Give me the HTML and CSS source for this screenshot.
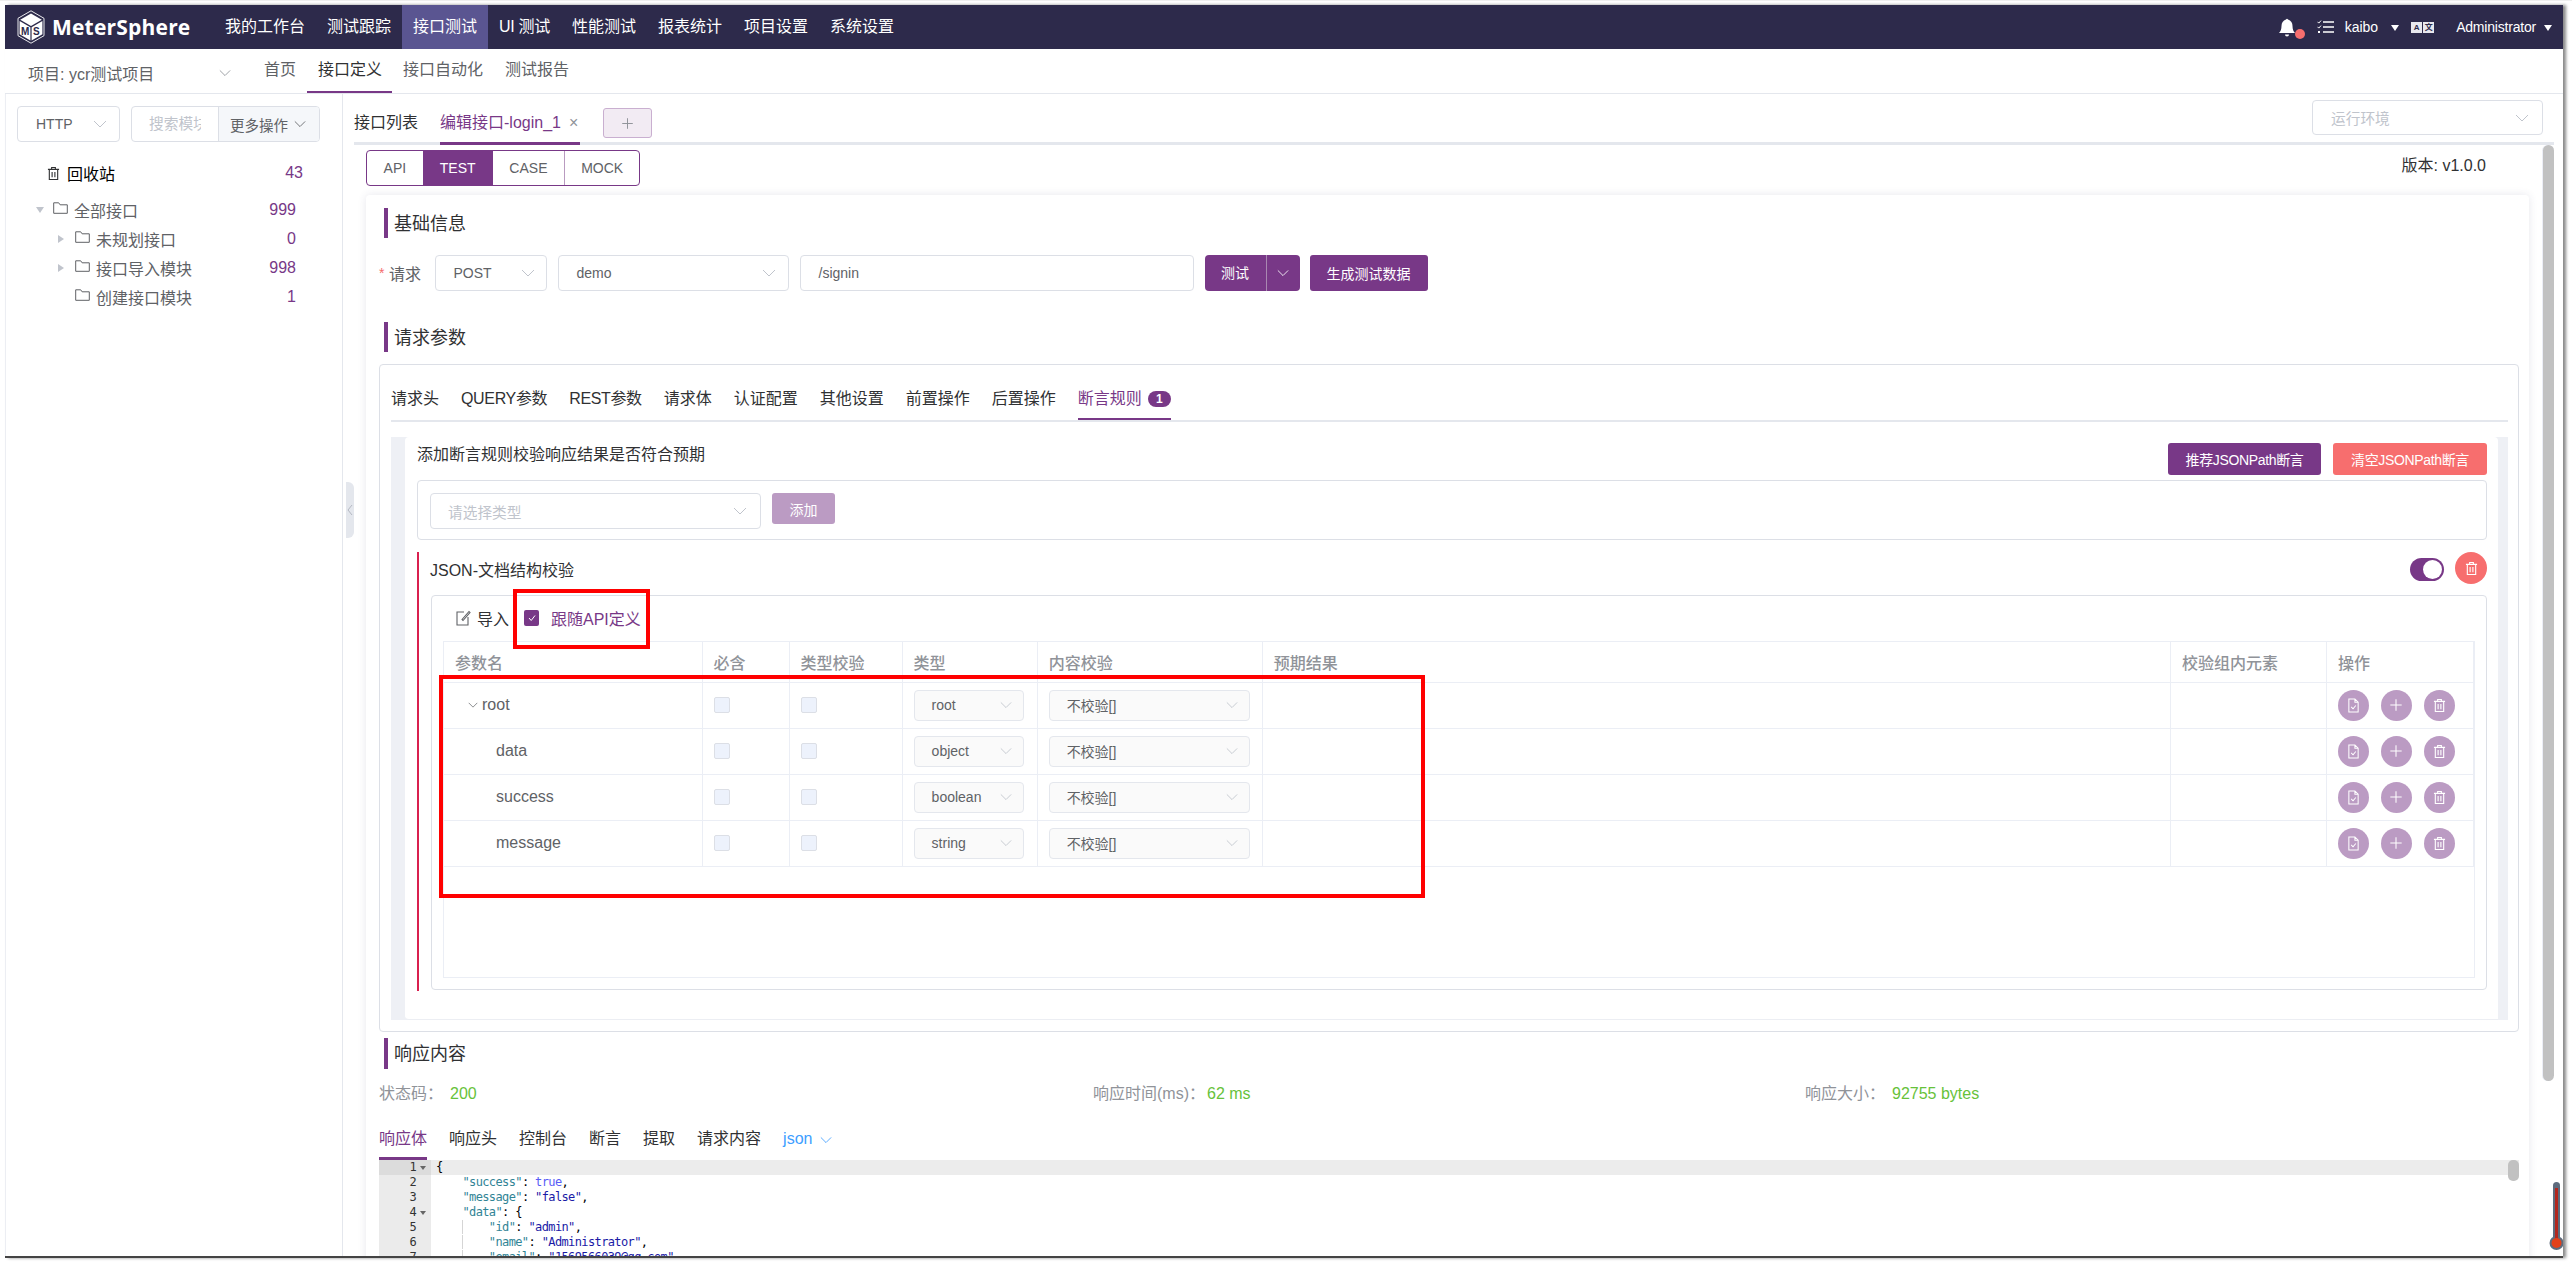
FILE: index.html
```html
<!DOCTYPE html>
<html>
<head>
	<meta charset="utf-8">
	<title>MeterSphere</title>
	<link rel="stylesheet" href="styles.css">
</head>
<body>
	<!-- shared icons -->
	<svg class="defs">
		<symbol id="chev" viewBox="0 0 14 8"><path d="M1 1l6 6 6-6" fill="none" stroke="currentColor"/></symbol>
		<symbol id="trash" viewBox="0 0 14 16"><path d="M1 3.5h12M5 3.5v-2h4v2M2.5 3.5v11h9v-11M5.5 6.5v5.5M8.5 6.5v5.5" fill="none" stroke="currentColor" stroke-width="1.2"/></symbol>
		<symbol id="folder" viewBox="0 0 15 12"><path d="M.7 11.3V.8h5l1.4 2h7.2v8.5z" fill="none" stroke="currentColor"/></symbol>
		<symbol id="doc" viewBox="0 0 14 16"><path d="M2 1h6.5L12 4.5V15H2zM8.5 1v3.5H12M4.5 9.5l2 2 3-3.5" fill="none" stroke="currentColor" stroke-width="1.1"/></symbol>
		<symbol id="plus" viewBox="0 0 16 16"><path d="M1.5 8h13M8 1.5v13" fill="none" stroke="currentColor" stroke-width="1.2"/></symbol>
	</svg>

	<div class="app">
		<div class="topbar">
			<div class="brand">
				<svg class="logo" viewBox="0 0 28 34">
					<path d="M14 .8L27 8.3v17.4L14 33.2 1 25.7V8.3z" fill="none" stroke="#fff" stroke-width=".9"/>
					<path d="M14 3.5L24.8 9.7 14 16 3.2 9.7z" fill="#fff"/>
					<path d="M2.6 11L13.4 17.3v13.2L2.6 24.2zM25.4 11L14.6 17.3v13.2l10.8-6.3z" fill="#fff"/>
					<text x="4" y="25" class="logo-text">M</text>
					<text x="16" y="25" class="logo-text">S</text>
				</svg>
				<span class="brand-name">MeterSphere</span>
			</div>
			<div class="nav-item">我的工作台</div>
			<div class="nav-item">测试跟踪</div>
			<div class="nav-item active">接口测试</div>
			<div class="nav-item nav-ui">UI 测试</div>
			<div class="nav-item">性能测试</div>
			<div class="nav-item">报表统计</div>
			<div class="nav-item">项目设置</div>
			<div class="nav-item">系统设置</div>
			<div class="top-right">
				<svg class="bell" viewBox="0 0 26 22">
					<path d="M7 1.5c.5-1 1.500-1 2 0 3 .8 4.500 3.500 4.500 6.500 0 3.500 1 5.500 2.500 7H0c1.500-1.500 2.500-3.500 2.500-7 0-3 1.500-5.700 4.500-6.500zM6 16.500h4a2 2 0 0 1-4 0z" fill="#fff"/>
					<circle cx="21" cy="16" r="5" fill="#f76e6e"/>
				</svg>
				<svg class="tasks" viewBox="0 0 17 14">
					<path d="M6 2h11M6 7h11M6 12h11" stroke="#fff" stroke-width="1.6"/>
					<path d="M.5 1.800l1.300 1.300L4 .6" fill="none" stroke="#fff"/>
					<path d="M.5 6.800l1.300 1.300L4 5.600" fill="none" stroke="#fff"/>
					<rect x="1" y="11" width="2" height="2" fill="#fff"/>
				</svg>
				<span class="top-name kaibo">kaibo</span>
				<span class="caret"></span>
				<span class="lang"><b>A</b><b>文</b></span>
				<span class="top-name admin">Administrator</span>
				<span class="caret"></span>
			</div>
		</div>

		<div class="subbar">
			<div class="project">
				<span>项目: ycr测试项目</span>
				<svg class="chev"><use href="#chev"/></svg>
			</div>
			<div class="sub-item">首页</div>
			<div class="sub-item active">接口定义</div>
			<div class="sub-item">接口自动化</div>
			<div class="sub-item">测试报告</div>
		</div>

		<div class="content">
			<div class="sidebar">
				<div class="side-tools">
					<div class="sel sel-http"><span>HTTP</span><svg class="chev"><use href="#chev"/></svg></div>
					<div class="search-group">
						<div class="search-input">搜索模块</div>
						<div class="search-more">更多操作<svg class="chev dark"><use href="#chev"/></svg></div>
					</div>
				</div>
				<div class="tree-row recycle">
					<svg class="ico-trash"><use href="#trash"/></svg>
					<span class="tree-label">回收站</span>
					<span class="tree-count">43</span>
				</div>
				<div class="tree">
					<div class="tree-row">
						<span class="tri-down"></span>
						<svg class="ico-folder"><use href="#folder"/></svg>
						<span class="tree-label">全部接口</span>
						<span class="tree-count">999</span>
					</div>
					<div class="tree-row child">
						<span class="tri-right"></span>
						<svg class="ico-folder"><use href="#folder"/></svg>
						<span class="tree-label">未规划接口</span>
						<span class="tree-count">0</span>
					</div>
					<div class="tree-row child">
						<span class="tri-right"></span>
						<svg class="ico-folder"><use href="#folder"/></svg>
						<span class="tree-label">接口导入模块</span>
						<span class="tree-count">998</span>
					</div>
					<div class="tree-row child">
						<span class="tri-none"></span>
						<svg class="ico-folder"><use href="#folder"/></svg>
						<span class="tree-label">创建接口模块</span>
						<span class="tree-count">1</span>
					</div>
				</div>
			</div>
			<div class="collapse-handle"><svg class="handle-chev" viewBox="0 0 6 12"><path d="M5 1L1 6l4 5" fill="none" stroke="#b4b8c2"/></svg></div>

			<div class="main">
				<div class="main-tabs">
					<div class="main-tab">接口列表</div>
					<div class="main-tab active">编辑接口-login_1<span class="tab-close">×</span></div>
					<div class="tab-add"><svg class="ico-add"><use href="#plus"/></svg></div>
					<div class="sel sel-env placeholder"><span>运行环境</span><svg class="chev"><use href="#chev"/></svg></div>
				</div>

				<div class="pane">
					<div class="mode-row">
						<div class="mode-group">
							<div class="mode mode-api">API</div>
							<div class="mode mode-test active">TEST</div>
							<div class="mode mode-case">CASE</div>
							<div class="mode mode-mock">MOCK</div>
						</div>
						<div class="version">版本: v1.0.0</div>
					</div>

					<div class="card">
						<div class="heading">基础信息</div>
						<div class="req-row">
							<span class="req-star">*</span>
							<span class="req-label">请求</span>
							<div class="sel sel-method"><span>POST</span><svg class="chev"><use href="#chev"/></svg></div>
							<div class="sel sel-env-demo"><span>demo</span><svg class="chev"><use href="#chev"/></svg></div>
							<div class="sel sel-path"><span>/signin</span></div>
							<div class="split-btn">
								<span class="split-main">测试</span>
								<span class="split-arrow"><svg class="chev white"><use href="#chev"/></svg></span>
							</div>
							<div class="btn btn-gen">生成测试数据</div>
						</div>

						<div class="heading heading-params">请求参数</div>
						<div class="param-box">
							<div class="tabs">
								<div class="tab">请求头</div>
								<div class="tab tab-latin">QUERY参数</div>
								<div class="tab tab-latin">REST参数</div>
								<div class="tab">请求体</div>
								<div class="tab">认证配置</div>
								<div class="tab">其他设置</div>
								<div class="tab">前置操作</div>
								<div class="tab">后置操作</div>
								<div class="tab active">断言规则<span class="badge">1</span></div>
							</div>

							<div class="assert-outer">
								<div class="assert-inner">
									<div class="assert-head">
										<div class="assert-title">添加断言规则校验响应结果是否符合预期</div>
										<div class="btn btn-json">推荐JSONPath断言</div>
										<div class="btn btn-clear">清空JSONPath断言</div>
									</div>
									<div class="assert-add">
										<div class="sel sel-type placeholder"><span>请选择类型</span><svg class="chev"><use href="#chev"/></svg></div>
										<div class="btn btn-add">添加</div>
									</div>

									<div class="json-block">
										<div class="json-head">
											<div class="json-title">JSON-文档结构校验</div>
											<div class="switch"><span class="knob"></span></div>
											<div class="circle-del"><svg class="ico-del"><use href="#trash"/></svg></div>
										</div>
										<div class="json-box">
											<div class="json-tools">
												<svg class="ico-edit" viewBox="0 0 15 16"><path d="M8 2H1v13h11V7M6 9.500L13 1.500l1 1L7 10.500z" fill="none" stroke="#606266" stroke-width="1.100"/></svg>
												<span class="import-text">导入</span>
												<span class="check-on"><svg class="check-mark" viewBox="0 0 10 10"><path d="M2 5l2.200 2.500L8 2.500" fill="none" stroke="#fff"/></svg></span>
												<span class="follow-text">跟随API定义</span>
											</div>
											<div class="table-wrap">
												<table class="schema">
													<colgroup>
														<col class="c-name"><col class="c-req"><col class="c-chk"><col class="c-type"><col class="c-rule"><col class="c-exp"><col class="c-grp"><col class="c-op">
													</colgroup>
													<tr>
														<th>参数名</th><th>必含</th><th>类型校验</th><th>类型</th><th>内容校验</th><th>预期结果</th><th>校验组内元素</th><th>操作</th>
													</tr>
													<tr>
														<td><div class="name-root"><svg class="chev tiny"><use href="#chev"/></svg>root</div></td>
														<td><span class="check-off"></span></td>
														<td><span class="check-off"></span></td>
														<td><div class="sel sel-cell"><span>root</span><svg class="chev"><use href="#chev"/></svg></div></td>
														<td><div class="sel sel-cell sel-rule"><span>不校验[]</span><svg class="chev"><use href="#chev"/></svg></div></td>
														<td></td>
														<td></td>
														<td><div class="ops">
															<span class="op"><svg class="ico-doc"><use href="#doc"/></svg></span>
															<span class="op"><svg class="ico-plus"><use href="#plus"/></svg></span>
															<span class="op"><svg class="ico-doc"><use href="#trash"/></svg></span>
														</div></td>
													</tr>
													<tr>
														<td><div class="name-child">data</div></td>
														<td><span class="check-off"></span></td>
														<td><span class="check-off"></span></td>
														<td><div class="sel sel-cell"><span>object</span><svg class="chev"><use href="#chev"/></svg></div></td>
														<td><div class="sel sel-cell sel-rule"><span>不校验[]</span><svg class="chev"><use href="#chev"/></svg></div></td>
														<td></td>
														<td></td>
														<td><div class="ops">
															<span class="op"><svg class="ico-doc"><use href="#doc"/></svg></span>
															<span class="op"><svg class="ico-plus"><use href="#plus"/></svg></span>
															<span class="op"><svg class="ico-doc"><use href="#trash"/></svg></span>
														</div></td>
													</tr>
													<tr>
														<td><div class="name-child">success</div></td>
														<td><span class="check-off"></span></td>
														<td><span class="check-off"></span></td>
														<td><div class="sel sel-cell"><span>boolean</span><svg class="chev"><use href="#chev"/></svg></div></td>
														<td><div class="sel sel-cell sel-rule"><span>不校验[]</span><svg class="chev"><use href="#chev"/></svg></div></td>
														<td></td>
														<td></td>
														<td><div class="ops">
															<span class="op"><svg class="ico-doc"><use href="#doc"/></svg></span>
															<span class="op"><svg class="ico-plus"><use href="#plus"/></svg></span>
															<span class="op"><svg class="ico-doc"><use href="#trash"/></svg></span>
														</div></td>
													</tr>
													<tr>
														<td><div class="name-child">message</div></td>
														<td><span class="check-off"></span></td>
														<td><span class="check-off"></span></td>
														<td><div class="sel sel-cell"><span>string</span><svg class="chev"><use href="#chev"/></svg></div></td>
														<td><div class="sel sel-cell sel-rule"><span>不校验[]</span><svg class="chev"><use href="#chev"/></svg></div></td>
														<td></td>
														<td></td>
														<td><div class="ops">
															<span class="op"><svg class="ico-doc"><use href="#doc"/></svg></span>
															<span class="op"><svg class="ico-plus"><use href="#plus"/></svg></span>
															<span class="op"><svg class="ico-doc"><use href="#trash"/></svg></span>
														</div></td>
													</tr>
												</table>
											</div>
										</div>
									</div>
								</div>
							</div>
						</div>

						<div class="heading heading-resp">响应内容</div>
						<div class="resp-stats">
							<div><span class="stat-label">状态码：</span><span class="stat-val">200</span></div>
							<div><span class="stat-label">响应时间(ms)：</span><span class="stat-val stat-time">62 ms</span></div>
							<div><span class="stat-label">响应大小：</span><span class="stat-val">92755 bytes</span></div>
						</div>
						<div class="resp-tabs">
							<div class="tab active">响应体</div>
							<div class="tab">响应头</div>
							<div class="tab">控制台</div>
							<div class="tab">断言</div>
							<div class="tab">提取</div>
							<div class="tab">请求内容</div>
							<div class="tab tab-json">json<svg class="chev blue"><use href="#chev"/></svg></div>
						</div>
						<div class="editor">
							<div class="code-line current"><span class="ln">1<i class="fold"></i></span><span class="code">{</span></div>
							<div class="code-line"><span class="ln">2</span><span class="code">    <span class="k">"success"</span>: <span class="b">true</span>,</span></div>
							<div class="code-line"><span class="ln">3</span><span class="code">    <span class="k">"message"</span>: <span class="s">"false"</span>,</span></div>
							<div class="code-line"><span class="ln">4<i class="fold"></i></span><span class="code">    <span class="k">"data"</span>: {</span></div>
							<div class="code-line"><span class="ln">5</span><span class="code"><span class="indent">    </span><span class="guide">    </span><span class="k">"id"</span>: <span class="s">"admin"</span>,</span></div>
							<div class="code-line"><span class="ln">6</span><span class="code"><span class="indent">    </span><span class="guide">    </span><span class="k">"name"</span>: <span class="s">"Administrator"</span>,</span></div>
							<div class="code-line"><span class="ln">7</span><span class="code"><span class="indent">    </span><span class="guide">    </span><span class="k">"email"</span>: <span class="s">"1569566039@qq.com"</span>,</span></div>
							<div class="editor-thumb"></div>
						</div>
					</div>
					<div class="pane-thumb"></div>
				</div>
			</div>
		</div>

		<!-- red annotation boxes drawn over the capture -->
		<div class="mark mark-check"></div>
		<div class="mark mark-table"></div>

		<svg class="thermo" viewBox="0 0 14 70">
			<rect x="4" y="0" width="7" height="62" rx="3.500" fill="#5d6b7d"/>
			<circle cx="7.500" cy="61" r="7" fill="#5d6b7d"/>
			<rect x="6" y="6" width="3" height="52" fill="#b3261e"/>
			<circle cx="7.500" cy="61" r="5" fill="#e2401a"/>
		</svg>
	</div>
</body>
</html>
```
FILE: styles.css
```css
html, body {
	margin: 0;
	height: 1265px;
	overflow: hidden;
	background-color: #fff;
	font-family: "Liberation Sans", "Noto Sans CJK SC", sans-serif;
	font-size: 16px;
	color: #606266;
}
body {
	border-top: 1px solid #eee;
	box-sizing: border-box;
}
.defs {
	display: none;
}
.app {
	position: relative;
	box-sizing: border-box;
	width: 2558px;
	height: 1253px;
	margin: 4px 0 0 5px;
	overflow: hidden;
	border-bottom: 2px solid #444;
	box-shadow: 3px 0 3px #8a8a8a;
	background-color: #fff;
}
.chev {
	flex: none;
	width: 14px;
	height: 8px;
	color: #c0c4cc;
}
.chev.dark { color: #606266; }
.chev.white { color: #fff; }
.chev.blue { color: #409eff; margin-left: 8px; width: 12px; }
.chev.tiny { width: 10px; height: 6px; margin-right: 4px; color: #606266; }

/* top bar */
.topbar {
	display: flex;
	height: 44px;
	background-color: #2d2a4b;
	color: #fff;
}
.brand {
	display: flex;
	align-items: center;
	box-sizing: border-box;
	width: 209px;
	padding-left: 12px;
}
.logo {
	width: 28px;
	height: 34px;
}
.logo-text {
	font-size: 10px;
	font-weight: bold;
	fill: #2d2a4b;
}
.brand-name {
	margin-left: 7px;
	font-family: "Open Sans", sans-serif;
	font-size: 21px;
	font-weight: 700;
	letter-spacing: .2px;
}
.nav-item {
	padding: 0 11px;
	line-height: 44px;
}
.nav-item.active {
	background-color: #5a5591;
}
.nav-ui {
	letter-spacing: -.3px;
}
.top-right {
	display: flex;
	align-items: center;
	margin-left: auto;
	padding-right: 11px;
	font-size: 14px;
}
.bell {
	width: 26px;
	height: 22px;
	margin-top: 3px;
}
.tasks {
	width: 17px;
	height: 14px;
	margin-left: 12px;
}
.kaibo {
	margin-left: 11px;
}
.caret {
	width: 0;
	height: 0;
	margin: 2px 0 0 13px;
	border-left: 4.5px solid transparent;
	border-right: 4.5px solid transparent;
	border-top: 6px solid #fff;
}
.lang {
	display: flex;
	gap: 1px;
	margin-left: 12px;
}
.lang b {
	width: 11px;
	height: 11px;
	background-color: #e8e8ee;
	color: #2d2a4b;
	font-size: 8px;
	line-height: 11px;
	text-align: center;
}
.admin {
	margin-left: 22px;
	letter-spacing: -.2px;
}
.admin + .caret {
	margin-left: 8px;
}

/* sub menu */
.subbar {
	display: flex;
	height: 44px;
	border-bottom: 1px solid #e4e7ed;
}
.project {
	display: flex;
	align-items: center;
	justify-content: space-between;
	box-sizing: border-box;
	width: 248px;
	padding: 4px 22px 0 23px;
}
.project .chev { color: #909399; width: 12px; }
.sub-item {
	padding: 0 11px;
	line-height: 42px;
}
.sub-item.active {
	padding-right: 10px;
	color: #303133;
	border-bottom: 2px solid #783887;
	height: 42px;
}

.content {
	position: relative;
	display: flex;
	height: 1162px;
}

/* left tree */
.sidebar {
	flex: none;
	box-sizing: border-box;
	width: 338px;
	padding-top: 12px;
	border-right: 1px solid #e4e7ed;
	border-left: 1px solid #eceef3;
}
.side-tools {
	display: flex;
	gap: 11px;
	padding-left: 11px;
}
.sel {
	display: flex;
	align-items: center;
	justify-content: space-between;
	box-sizing: border-box;
	height: 36px;
	border: 1px solid #dcdfe6;
	border-radius: 4px;
	background-color: #fff;
	font-size: 14px;
}
.sel.placeholder {
	color: #c0c4cc;
	font-size: 14.7px;
}
.sel-http {
	width: 103px;
	padding: 0 12px 0 18px;
}
.search-group {
	display: flex;
	box-sizing: border-box;
	width: 189px;
	height: 36px;
	border: 1px solid #dcdfe6;
	border-radius: 4px;
}
.search-input {
	flex: none;
	width: 52px;
	margin: 0 17px;
	overflow: hidden;
	white-space: nowrap;
	color: #c0c4cc;
	font-size: 14.7px;
	line-height: 34px;
}
.search-more {
	display: flex;
	flex: 1;
	align-items: center;
	gap: 6px;
	padding-left: 11px;
	border-left: 1px solid #dcdfe6;
	background-color: #f5f7fa;
	border-radius: 0 3px 3px 0;
	font-size: 14.5px;
}
.search-more .chev { width: 12px; }
.tree-row {
	display: flex;
	align-items: center;
	height: 29px;
	padding-left: 30px;
	padding-right: 46px;
}
.tree-row.recycle {
	height: 36px;
	margin-top: 13px;
	padding: 0 39px 0 41px;
	color: #000;
}
.recycle .tree-label { margin-left: 7px; }
.tree { margin-top: 4px; }
.tree .child { padding-left: 52px; }
.tree-count {
	margin-left: auto;
	color: #783887;
}
.tree-label { margin-left: 6px; }
.ico-trash {
	width: 13px;
	height: 15px;
	color: #303133;
}
.ico-folder {
	width: 15px;
	height: 12px;
	margin-top: -3px;
	color: #606266;
}
.tri-down {
	width: 0;
	height: 0;
	margin-right: 9px;
	border-left: 4.5px solid transparent;
	border-right: 4.5px solid transparent;
	border-top: 6px solid #c0c4cc;
}
.tri-right {
	width: 0;
	height: 0;
	margin-right: 11px;
	border-top: 4.5px solid transparent;
	border-bottom: 4.5px solid transparent;
	border-left: 6px solid #c0c4cc;
}
.tri-none {
	width: 6px;
	margin-right: 11px;
}
.collapse-handle {
	position: absolute;
	left: 341px;
	top: 388px;
	display: flex;
	align-items: center;
	width: 8px;
	height: 56px;
	background-color: #e4e7ed;
	border-radius: 0 6px 6px 0;
}
.handle-chev {
	width: 6px;
	height: 12px;
	margin-left: 1px;
}

/* main */
.main {
	flex: 1;
	min-width: 0;
	padding-left: 11px;
}
.main-tabs {
	display: flex;
	box-sizing: border-box;
	width: 2200px;
	height: 51px;
	border-bottom: 3px solid #e4e7ed;
}
.main-tab {
	height: 48px;
	box-sizing: border-box;
	padding-top: 19px;
	color: #303133;
	line-height: 20px;
}
.main-tab.active {
	margin-left: 22px;
	width: 140px;
	height: 51px;
	border-bottom: 3px solid #783887;
	color: #783887;
}
.tab-close {
	margin-left: 8px;
	color: #909399;
	font-size: 16px;
}
.tab-add {
	display: flex;
	align-items: center;
	justify-content: center;
	box-sizing: border-box;
	width: 49px;
	height: 30px;
	margin: 14px 0 0 23px;
	border: 1px solid #c9afd0;
	border-radius: 3px;
	background-color: #f2ebf3;
}
.ico-add {
	width: 13px;
	height: 13px;
	color: #909399;
}
.sel-env {
	width: 231px;
	height: 35px;
	margin: 6px 11px 0 auto;
	padding: 0 13px 0 18px;
}

.pane {
	position: relative;
	width: 2200px;
	box-sizing: border-box;
	padding: 5px 25px 0 12px;
}
.pane-thumb {
	position: absolute;
	right: 0;
	top: 0;
	width: 11px;
	height: 936px;
	border-radius: 6px;
	background-color: #c1c1c1;
	box-shadow: -1px 0 0 #eceef6;
}
.mode-row {
	display: flex;
	justify-content: space-between;
	height: 36px;
	padding-right: 43px;
	margin-bottom: 9px;
}
.version {
	line-height: 32px;
	color: #303133;
}
.mode-group {
	display: flex;
	box-sizing: border-box;
	width: 274px;
	height: 36px;
	border: 1px solid #783887;
	border-radius: 4px;
	font-size: 14px;
	line-height: 34px;
	text-align: center;
}
.mode-api { width: 56px; }
.mode-test { width: 70px; }
.mode-case { width: 72px; border-right: 1px solid #b99bc0; }
.mode-mock { width: 74px; }
.mode.active {
	background-color: #783887;
	color: #fff;
}

.card {
	box-sizing: border-box;
	padding: 13px 10px 0 13px;
	border-radius: 4px;
	box-shadow: 0 0 8px rgba(60, 60, 110, .12);
	height: 1100px;
}
.heading {
	box-sizing: border-box;
	height: 30px;
	margin-left: 5px;
	padding: 2px 0 0 6px;
	border-left: 4px solid #783887;
	color: #303133;
	font-size: 18px;
	line-height: 28px;
}
.req-row {
	display: flex;
	align-items: center;
	height: 36px;
	margin-top: 17px;
}
.req-star {
	width: 10px;
	color: #f56c6c;
	font-size: 14px;
}
.req-label {
	width: 45.5px;
}
.sel-method {
	width: 112px;
	padding: 0 11px 0 18px;
}
.sel-env-demo {
	width: 231px;
	margin-left: 11px;
	padding: 0 12px 0 18px;
}
.sel-path {
	width: 394px;
	margin-left: 11px;
	padding: 0 18px;
}
.split-btn {
	display: flex;
	width: 95px;
	height: 36px;
	margin-left: 11px;
	border-radius: 4px;
	background-color: #783887;
	color: #fff;
	font-size: 14px;
	line-height: 36px;
	text-align: center;
}
.split-main {
	width: 61px;
	border-right: 1px solid #a988b1;
}
.split-arrow {
	display: flex;
	flex: 1;
	align-items: center;
	justify-content: center;
}
.split-arrow .chev { width: 12px; }
.btn {
	display: flex;
	align-items: center;
	justify-content: center;
	flex: none;
	box-sizing: border-box;
	border-radius: 3px;
	background-color: #783887;
	color: #fff;
	font-size: 14px;
}
.btn-gen {
	width: 118px;
	height: 36px;
	margin-left: 10px;
}
.heading-params {
	margin-top: 31px;
}
.param-box {
	box-sizing: border-box;
	height: 668px;
	margin-top: 12px;
	padding: 10px 10px 0 11px;
	border: 1px solid #dcdfe6;
	border-radius: 4px;
}
.tabs {
	display: flex;
	gap: 22px;
	height: 45px;
	border-bottom: 2px solid #e4e7ed;
	color: #303133;
}
.tab {
	box-sizing: border-box;
	height: 45px;
	padding-top: 13px;
	line-height: 22px;
}
.tab-latin {
	letter-spacing: -.35px;
}
.tab.active {
	color: #783887;
	border-bottom: 2px solid #783887;
}
.badge {
	display: inline-block;
	width: 23px;
	height: 16px;
	margin-left: 6px;
	border-radius: 8px;
	background-color: #783887;
	color: #fff;
	font-size: 12px;
	font-weight: bold;
	line-height: 16px;
	text-align: center;
	vertical-align: 1px;
}

/* assertion rules */
.assert-outer {
	margin-top: 15px;
	padding: 0 10px 0 14px;
	background-color: #eef0f5;
}
.assert-inner {
	box-sizing: border-box;
	height: 583px;
	padding: 6px 11px 0 12px;
	border-radius: 4px 4px 0 4px;
	background-color: #fff;
	border-bottom: 1px solid #eceef3;
}
.assert-head {
	display: flex;
	gap: 12px;
}
.assert-title {
	flex: 1;
	color: #303133;
	line-height: 24px;
}
.btn-json {
	width: 153px;
	height: 32px;
	letter-spacing: -.35px;
}
.btn-clear {
	width: 154px;
	height: 32px;
	background-color: #f76e6e;
	letter-spacing: -.35px;
}
.assert-add {
	display: flex;
	align-items: flex-start;
	gap: 11px;
	box-sizing: border-box;
	height: 60px;
	margin-top: 5px;
	padding: 12px;
	border: 1px solid #dcdfe6;
	border-radius: 4px;
}
.sel-type {
	width: 331px;
	padding: 0 13px 0 17px;
}
.btn-add {
	width: 63px;
	height: 31px;
	background-color: #bb9bc3;
}
.json-block {
	height: 439px;
	margin-top: 12px;
	padding-left: 11px;
	border-left: 2px solid #d9204f;
}
.json-head {
	display: flex;
	align-items: center;
	height: 32px;
	padding-top: 0;
}
.json-title {
	flex: 1;
	margin-top: 1px;
	color: #303133;
}
.switch {
	display: flex;
	justify-content: flex-end;
	align-items: center;
	box-sizing: border-box;
	width: 34px;
	height: 23px;
	padding-right: 2px;
	margin-top: 3px;
	border-radius: 12px;
	background-color: #783887;
}
.knob {
	width: 19px;
	height: 19px;
	border-radius: 50%;
	background-color: #fff;
}
.circle-del {
	display: flex;
	align-items: center;
	justify-content: center;
	width: 32px;
	height: 32px;
	margin-left: 11px;
	border-radius: 50%;
	background-color: #f76e6e;
	color: #fff;
}
.ico-del {
	width: 13px;
	height: 15px;
}
.json-box {
	box-sizing: border-box;
	height: 395px;
	margin: 11px 0 0 1px;
	padding: 11px 11px 0;
	border: 1px solid #dcdfe6;
	border-radius: 4px;
}
.json-tools {
	display: flex;
	align-items: center;
	height: 22px;
	margin-bottom: 12px;
	padding-left: 13px;
}
.ico-edit {
	width: 15px;
	height: 16px;
}
.import-text {
	margin-left: 6px;
	color: #303133;
}
.check-on {
	display: flex;
	align-items: center;
	justify-content: center;
	width: 15px;
	height: 16px;
	margin-left: 15px;
	border-radius: 2px;
	background-color: #783887;
}
.check-mark {
	width: 10px;
	height: 10px;
}
.follow-text {
	margin-left: 12px;
	color: #783887;
}
.table-wrap {
	box-sizing: border-box;
	height: 337px;
	border: 1px solid #ebeef5;
}
.schema {
	width: 100%;
	border-collapse: collapse;
	table-layout: fixed;
}
.c-name { width: 258px; }
.c-req { width: 87px; }
.c-chk { width: 113px; }
.c-type { width: 135px; }
.c-rule { width: 225px; }
.c-exp { width: 908px; }
.c-grp { width: 156px; }
.c-op { width: 147px; }
.schema th, .schema td {
	box-sizing: border-box;
	padding: 0 11px;
	border-right: 1px solid #ebeef5;
	border-bottom: 1px solid #ebeef5;
	text-align: left;
}
.schema th {
	height: 40px;
	color: #909399;
	font-weight: 500;
}
.schema td {
	height: 46px;
}
.name-root {
	display: flex;
	align-items: center;
	padding-left: 13px;
}
.name-child {
	padding-left: 41px;
}
.check-off {
	display: block;
	box-sizing: border-box;
	width: 16px;
	height: 16px;
	border: 1px solid #dcdfe6;
	border-radius: 2px;
	background-color: #edf2fc;
}
.sel-cell {
	width: 110px;
	height: 31px;
	padding: 0 11px 0 17px;
	border-color: #e4e7ed;
	background-color: #fafafa;
	font-size: 14px;
}
.sel-rule {
	width: 201px;
}
.sel-cell .chev { width: 12px; }
.ops {
	display: flex;
	gap: 12px;
}
.op {
	display: flex;
	align-items: center;
	justify-content: center;
	width: 31px;
	height: 31px;
	border-radius: 50%;
	background-color: #bb9bc3;
	color: #fff;
}
.ico-doc {
	width: 13px;
	height: 15px;
}
.ico-plus {
	width: 14px;
	height: 14px;
}

/* response */
.heading-resp {
	height: 31px;
	margin-top: 6px;
}
.resp-stats {
	display: grid;
	grid-template-columns: 714px 712px 1fr;
	height: 24px;
	margin-top: 13px;
	line-height: 24px;
	font-size: 16px;
}
.stat-label {
	color: #909399;
}
.stat-val {
	margin-left: 7px;
	color: #67c23a;
}
.stat-time {
	margin-left: 2px;
}
.resp-tabs {
	display: flex;
	gap: 22px;
	height: 45px;
	margin-top: 9px;
	color: #303133;
}
.resp-tabs .tab.active {
	border-bottom-width: 3px;
}
.tab-json {
	color: #409eff;
}
.editor {
	position: relative;
	font-family: "DejaVu Sans Mono", "Liberation Mono", monospace;
	font-size: 12px;
	letter-spacing: -.62px;
	line-height: 15px;
	color: #000;
}
.code-line {
	display: flex;
	height: 15px;
}
.code-line.current {
	background-color: #ececec;
}
.ln {
	position: relative;
	flex: none;
	box-sizing: border-box;
	width: 52px;
	padding-right: 15px;
	background-color: #ebebeb;
	text-align: right;
	color: #333;
}
.current .ln {
	background-color: #dcdcdc;
}
.fold {
	position: absolute;
	right: 5px;
	top: 6px;
	border-left: 3px solid transparent;
	border-right: 3px solid transparent;
	border-top: 4px solid #666;
}
.code {
	padding-left: 5px;
	white-space: pre;
}
.guide {
	box-shadow: inset 1px 0 0 #d5d5d5;
}
.k { color: #318495; }
.s { color: #1a1aa6; }
.b { color: #585cf6; }
.editor-thumb {
	position: absolute;
	right: 0;
	top: 0;
	width: 11px;
	height: 21px;
	border-radius: 5px;
	background-color: #c1c1c1;
}

/* overlays */
.mark {
	position: absolute;
	box-sizing: border-box;
	border: 4px solid #f00;
}
.mark-check {
	left: 508px;
	top: 584px;
	width: 137px;
	height: 60px;
}
.mark-table {
	left: 434px;
	top: 670px;
	width: 986px;
	height: 223px;
}
.thermo {
	position: absolute;
	left: 2544px;
	top: 1177px;
	width: 14px;
	height: 70px;
}
```
